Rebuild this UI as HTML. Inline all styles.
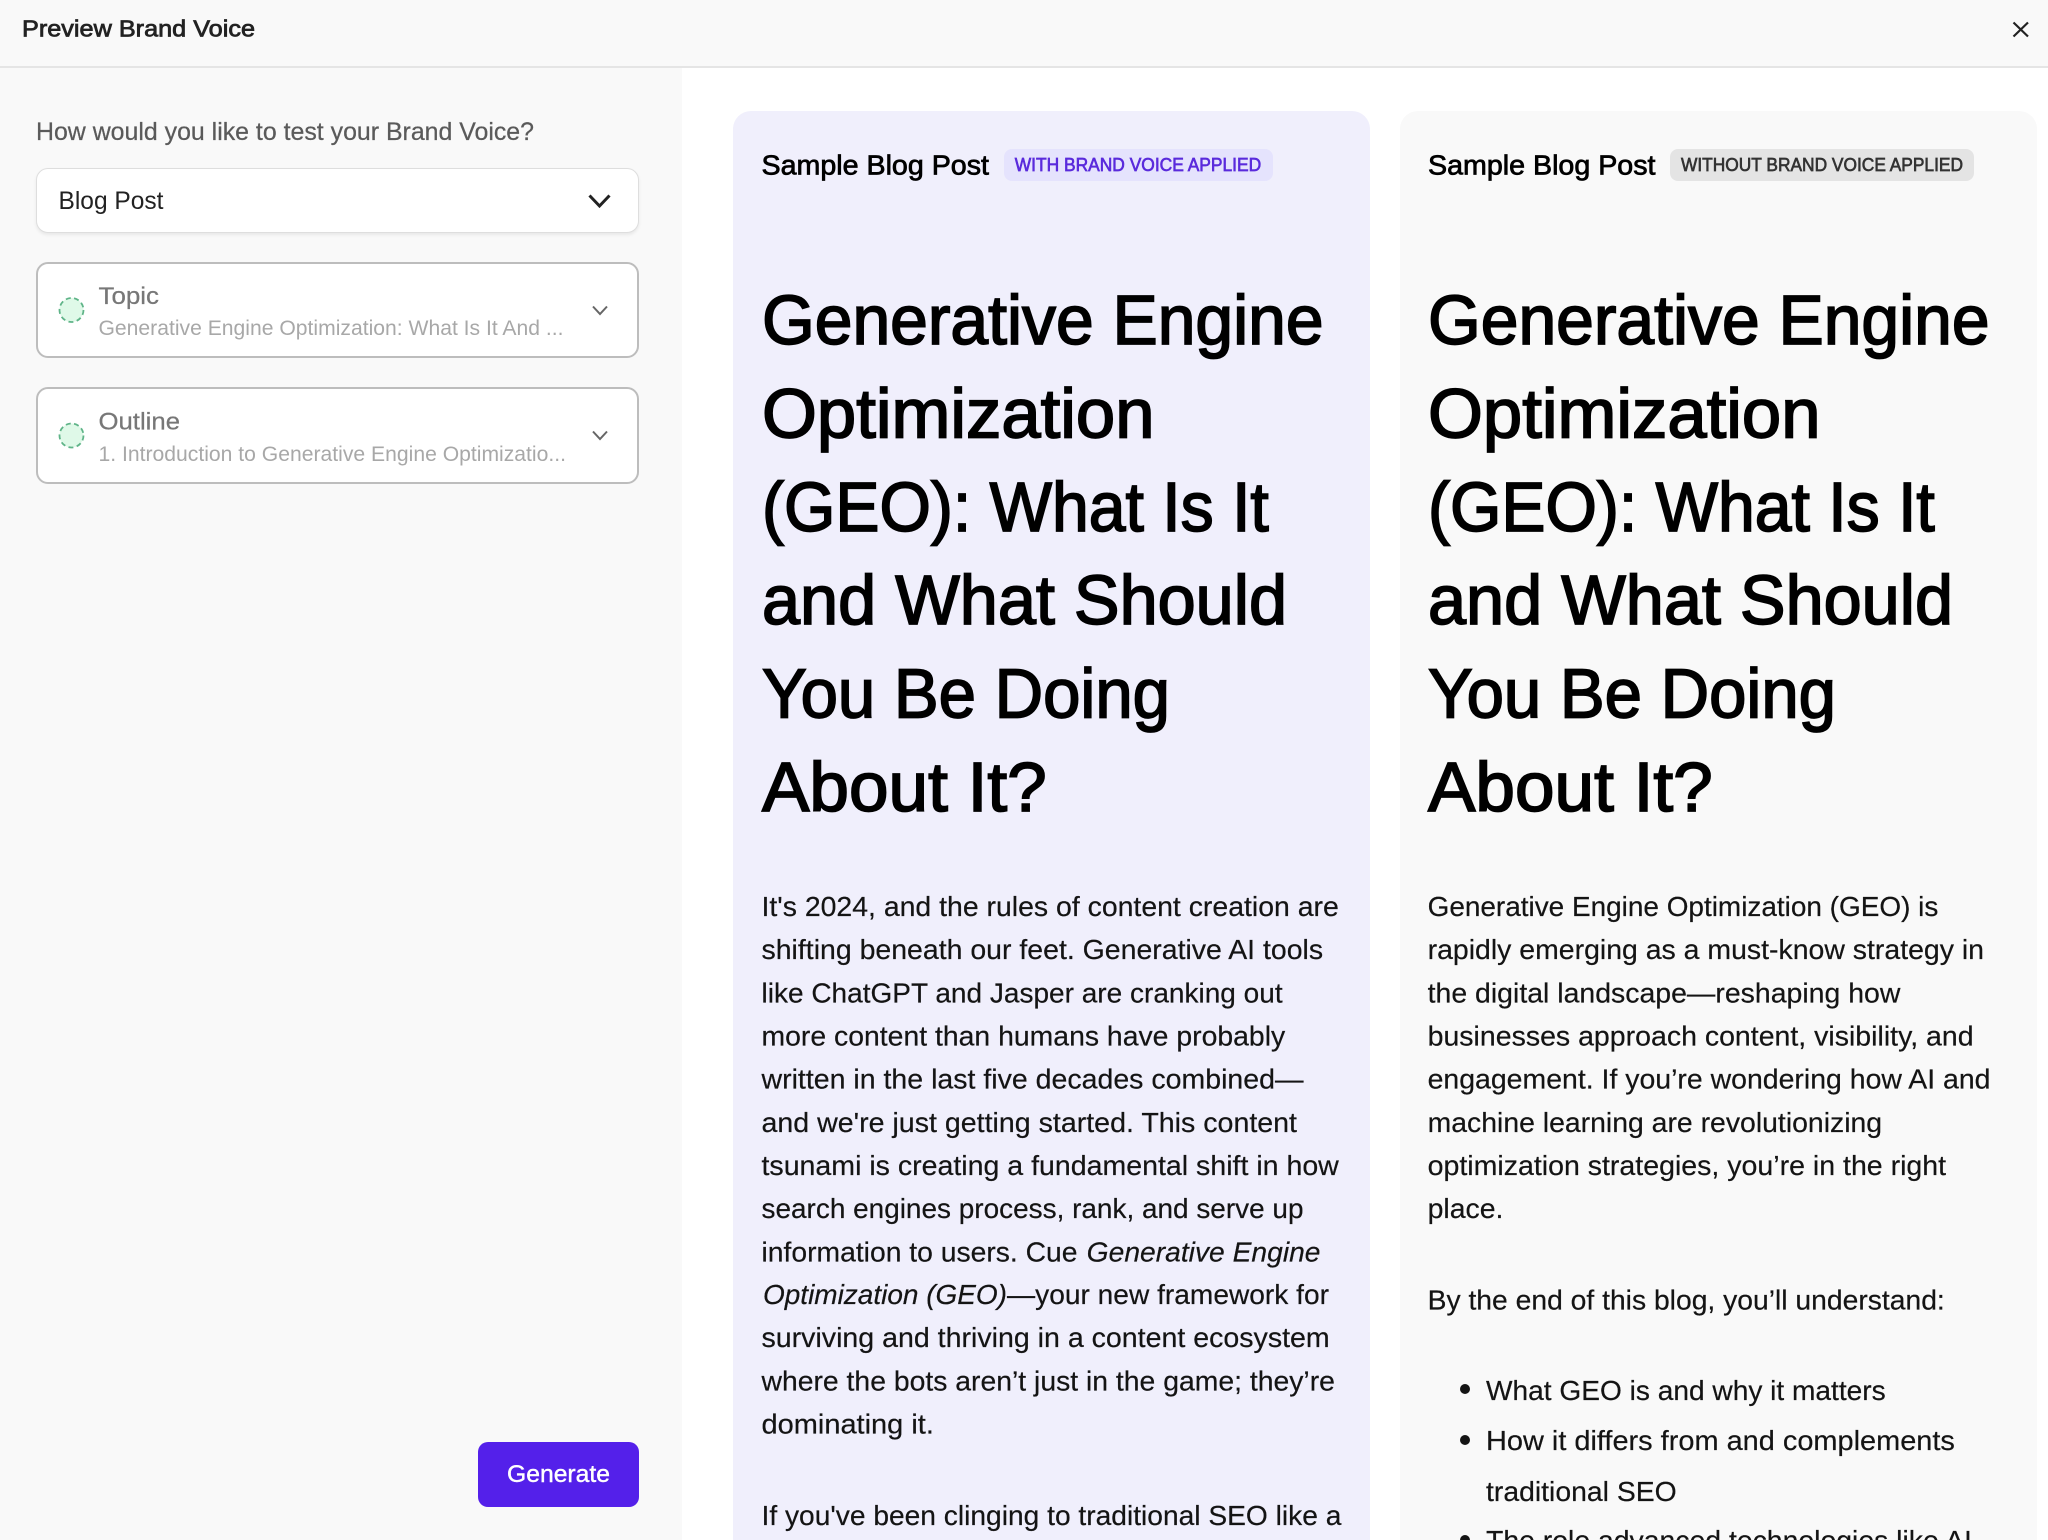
<!DOCTYPE html>
<html lang="en">
<head>
<meta charset="utf-8">
<title>Preview Brand Voice</title>
<style>
html,body{margin:0;padding:0;background:#fff;width:2048px;height:1540px;overflow:hidden}
#page{position:relative;width:2048px;height:1540px;overflow:hidden;font-family:"Liberation Sans",sans-serif}
.abs{position:absolute;box-sizing:border-box}
#hdr{left:0;top:0;width:2048px;height:68px;background:#f9f9f9;border-bottom:2px solid #e5e5e5}
#side{left:0;top:68px;width:682px;height:1472px;background:#f9f9f9}
.panel{top:111px;height:1429px;border-radius:18px 18px 0 0}
#p1{left:733px;width:637px;background:#f0effc}
#p2{left:1400px;width:637px;background:#f9f9f9}
.badge{top:149px;height:32px;border-radius:8px}
#b1{left:1004px;width:269px;background:#e5e3fd}
#b2{left:1670px;width:304px;background:#e4e4e4}
#sel{left:36px;top:168px;width:603px;height:65px;background:#fff;border:1.5px solid #dedede;border-radius:12px;box-shadow:0 2px 3px rgba(0,0,0,.07)}
.card{left:36px;width:603px;background:#fff;border:2px solid #bdbdbd;border-radius:12px}
#c1{top:262px;height:96px}
#c2{top:387px;height:97px}
#gen{left:478px;top:1442px;width:161px;height:65px;background:#5420ea;border-radius:10px}
svg{position:absolute;left:0;top:0}
.h1{font-size:70px;fill:#000;stroke:#000;stroke-width:1.7px}
.b{font-size:28px;fill:#141414;stroke:#141414;stroke-width:.2px}
.m{stroke-width:.75px}
</style>
</head>
<body>
<div id="page">
<div class="abs" id="side"></div>
<div class="abs" id="hdr"></div>
<div class="abs panel" id="p1"></div>
<div class="abs panel" id="p2"></div>
<div class="abs badge" id="b1"></div>
<div class="abs badge" id="b2"></div>
<div class="abs" id="sel"></div>
<div class="abs card" id="c1"></div>
<div class="abs card" id="c2"></div>
<div class="abs" id="gen"></div>

<svg width="2048" height="1540" viewBox="0 0 2048 1540" font-family="'Liberation Sans',sans-serif" xmlns="http://www.w3.org/2000/svg">
<text x="22" y="36.5" font-size="23" fill="#222" stroke="#222" class="m" textLength="233" lengthAdjust="spacingAndGlyphs">Preview Brand Voice</text>
<text x="36" y="140" font-size="25" fill="#5a5a5a" stroke="#5a5a5a" stroke-width=".25" textLength="498" lengthAdjust="spacingAndGlyphs">How would you like to test your Brand Voice?</text>
<text x="58.5" y="209" font-size="25" fill="#222" textLength="105" lengthAdjust="spacingAndGlyphs">Blog Post</text>
<text x="98.5" y="304" font-size="24" fill="#777" stroke="#777" stroke-width=".25" textLength="60.5" lengthAdjust="spacingAndGlyphs">Topic</text>
<text x="98.5" y="335" font-size="21" fill="#a8a8a8" textLength="465" lengthAdjust="spacingAndGlyphs">Generative Engine Optimization: What Is It And ...</text>
<text x="98.5" y="429.5" font-size="24" fill="#777" stroke="#777" stroke-width=".25" textLength="81.5" lengthAdjust="spacingAndGlyphs">Outline</text>
<text x="98.5" y="461" font-size="21" fill="#a8a8a8" textLength="467.5" lengthAdjust="spacingAndGlyphs">1. Introduction to Generative Engine Optimizatio...</text>
<text x="507" y="1482" font-size="24" fill="#fff" stroke="#fff" stroke-width=".4" textLength="103" lengthAdjust="spacingAndGlyphs">Generate</text>

<text x="761.5" y="174.5" font-size="28" fill="#000" stroke="#000" class="m" textLength="227.5" lengthAdjust="spacingAndGlyphs">Sample Blog Post</text>
<text x="1014.7" y="171" font-size="18" fill="#5a2bdc" stroke="#5a2bdc" stroke-width=".65" textLength="246.5" lengthAdjust="spacingAndGlyphs">WITH BRAND VOICE APPLIED</text>
<text x="1428" y="174.5" font-size="28" fill="#000" stroke="#000" class="m" textLength="227.5" lengthAdjust="spacingAndGlyphs">Sample Blog Post</text>
<text x="1681" y="171" font-size="18" fill="#333" stroke="#333" stroke-width=".65" textLength="282" lengthAdjust="spacingAndGlyphs">WITHOUT BRAND VOICE APPLIED</text>

<!-- headings -->
<text class="h1" x="762" y="344" textLength="561.6" lengthAdjust="spacingAndGlyphs">Generative Engine</text>
<text class="h1" x="762" y="437.5" textLength="392.5" lengthAdjust="spacingAndGlyphs">Optimization</text>
<text class="h1" x="762" y="531" textLength="506.8" lengthAdjust="spacingAndGlyphs">(GEO): What Is It</text>
<text class="h1" x="762" y="624" textLength="525" lengthAdjust="spacingAndGlyphs">and What Should</text>
<text class="h1" x="762" y="717.5" textLength="408" lengthAdjust="spacingAndGlyphs">You Be Doing</text>
<text class="h1" x="762" y="811" textLength="284.7" lengthAdjust="spacingAndGlyphs">About It?</text>

<text class="h1" x="1428" y="344" textLength="561.6" lengthAdjust="spacingAndGlyphs">Generative Engine</text>
<text class="h1" x="1428" y="437.5" textLength="392.5" lengthAdjust="spacingAndGlyphs">Optimization</text>
<text class="h1" x="1428" y="531" textLength="506.8" lengthAdjust="spacingAndGlyphs">(GEO): What Is It</text>
<text class="h1" x="1428" y="624" textLength="525" lengthAdjust="spacingAndGlyphs">and What Should</text>
<text class="h1" x="1428" y="717.5" textLength="408" lengthAdjust="spacingAndGlyphs">You Be Doing</text>
<text class="h1" x="1428" y="811" textLength="284.7" lengthAdjust="spacingAndGlyphs">About It?</text>

<!-- column 1 body -->
<text class="b" x="761.5" y="916" textLength="577.3" lengthAdjust="spacingAndGlyphs">It's 2024, and the rules of content creation are</text>
<text class="b" x="761.5" y="959.2" textLength="561.6" lengthAdjust="spacingAndGlyphs">shifting beneath our feet. Generative AI tools</text>
<text class="b" x="761.5" y="1002.3" textLength="521.1" lengthAdjust="spacingAndGlyphs">like ChatGPT and Jasper are cranking out</text>
<text class="b" x="761.5" y="1045.5" textLength="523.7" lengthAdjust="spacingAndGlyphs">more content than humans have probably</text>
<text class="b" x="761.5" y="1088.6" textLength="542" lengthAdjust="spacingAndGlyphs">written in the last five decades combined—</text>
<text class="b" x="761.5" y="1131.8" textLength="535.5" lengthAdjust="spacingAndGlyphs">and we're just getting started. This content</text>
<text class="b" x="761.5" y="1175" textLength="577.3" lengthAdjust="spacingAndGlyphs">tsunami is creating a fundamental shift in how</text>
<text class="b" x="761.5" y="1218.1" textLength="542" lengthAdjust="spacingAndGlyphs">search engines process, rank, and serve up</text>
<text class="b" x="761.5" y="1261.3" textLength="316" lengthAdjust="spacingAndGlyphs">information to users. Cue</text>
<text class="b" x="1086.7" y="1261.3" font-style="italic" textLength="233.8" lengthAdjust="spacingAndGlyphs">Generative Engine</text>
<text class="b" x="763" y="1304" font-style="italic" textLength="244" lengthAdjust="spacingAndGlyphs">Optimization (GEO)</text>
<text class="b" x="1007" y="1304" textLength="322" lengthAdjust="spacingAndGlyphs">—your new framework for</text>
<text class="b" x="761.5" y="1347" textLength="568.2" lengthAdjust="spacingAndGlyphs">surviving and thriving in a content ecosystem</text>
<text class="b" x="761.5" y="1390.5" textLength="573.4" lengthAdjust="spacingAndGlyphs">where the bots aren’t just in the game; they’re</text>
<text class="b" x="761.5" y="1433.5" textLength="172.4" lengthAdjust="spacingAndGlyphs">dominating it.</text>
<text class="b" x="761.5" y="1525" textLength="579.9" lengthAdjust="spacingAndGlyphs">If you've been clinging to traditional SEO like a</text>

<!-- column 2 body -->
<text class="b" x="1427.6" y="916" textLength="510.7" lengthAdjust="spacingAndGlyphs">Generative Engine Optimization (GEO) is</text>
<text class="b" x="1427.6" y="959.2" textLength="556.4" lengthAdjust="spacingAndGlyphs">rapidly emerging as a must-know strategy in</text>
<text class="b" x="1427.6" y="1002.3" textLength="472.8" lengthAdjust="spacingAndGlyphs">the digital landscape—reshaping how</text>
<text class="b" x="1427.6" y="1045.5" textLength="546" lengthAdjust="spacingAndGlyphs">businesses approach content, visibility, and</text>
<text class="b" x="1427.6" y="1088.6" textLength="562.9" lengthAdjust="spacingAndGlyphs">engagement. If you’re wondering how AI and</text>
<text class="b" x="1427.6" y="1131.8" textLength="454.5" lengthAdjust="spacingAndGlyphs">machine learning are revolutionizing</text>
<text class="b" x="1427.6" y="1175" textLength="518.5" lengthAdjust="spacingAndGlyphs">optimization strategies, you’re in the right</text>
<text class="b" x="1427.6" y="1218.1" textLength="75.8" lengthAdjust="spacingAndGlyphs">place.</text>
<text class="b" x="1427.6" y="1309.5" textLength="517.2" lengthAdjust="spacingAndGlyphs">By the end of this blog, you’ll understand:</text>
<circle cx="1465" cy="1389" r="5" fill="#141414"/>
<text class="b" x="1486" y="1400" textLength="399.7" lengthAdjust="spacingAndGlyphs">What GEO is and why it matters</text>
<circle cx="1465" cy="1440" r="5" fill="#141414"/>
<text class="b" x="1486" y="1450" textLength="468.9" lengthAdjust="spacingAndGlyphs">How it differs from and complements</text>
<text class="b" x="1486" y="1501" textLength="190.7" lengthAdjust="spacingAndGlyphs">traditional SEO</text>
<circle cx="1465" cy="1540" r="5" fill="#141414"/>
<text class="b" x="1486" y="1550" textLength="485.9" lengthAdjust="spacingAndGlyphs">The role advanced technologies like AI</text>

<!-- icons -->
<path d="M2013.5 22.5L2028 36.5M2028 22.5L2013.5 36.5" fill="none" stroke="#222" stroke-width="2.2"/>
<path d="M589.5 195.5L599.5 206L609.5 195.5" fill="none" stroke="#222" stroke-width="3"/>
<path d="M593 306.5L600 314L607 306.5" fill="none" stroke="#666" stroke-width="2"/>
<path d="M593 431.5L600 439L607 431.5" fill="none" stroke="#666" stroke-width="2"/>
<circle cx="71.5" cy="310" r="12" fill="#dff9e8" stroke="#5fb488" stroke-width="1.8" stroke-dasharray="5 3.4"/>
<circle cx="71.5" cy="435.5" r="12" fill="#dff9e8" stroke="#5fb488" stroke-width="1.8" stroke-dasharray="5 3.4"/>
</svg>
</div>
</body>
</html>
